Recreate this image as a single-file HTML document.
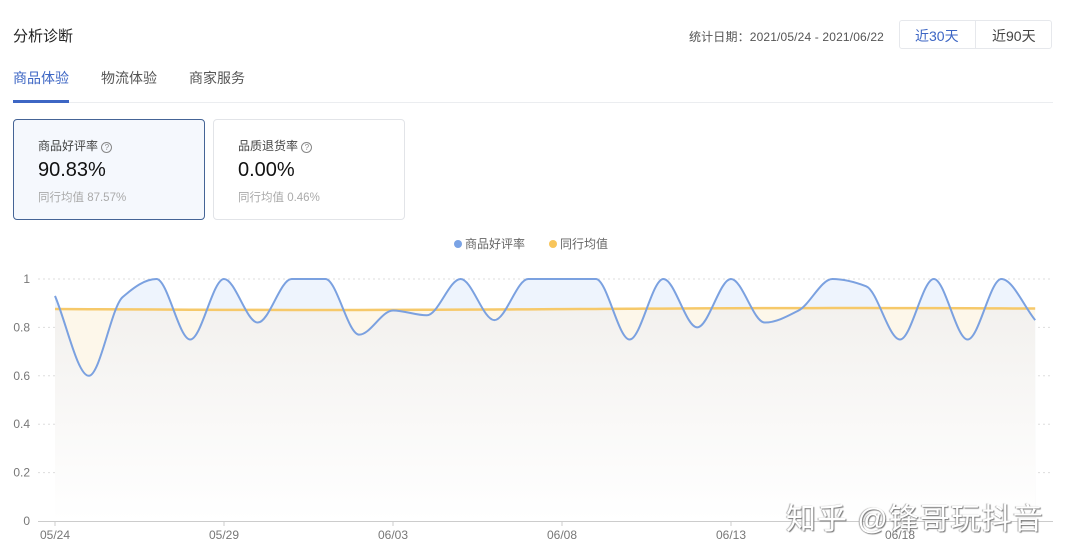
<!DOCTYPE html>
<html><head><meta charset="utf-8"><style>
body{margin:0;width:1074px;height:560px;overflow:hidden;background:#fff;font-family:"Liberation Sans","Noto Sans CJK SC",sans-serif;position:relative}
.a{position:absolute;white-space:nowrap}
</style></head><body>
<div class="a" style="left:13px;top:25px;font-size:15px;color:#222">分析诊断</div>
<div class="a" style="left:689px;top:28px;font-size:12px;color:#555;letter-spacing:0.15px">统计日期：2021/05/24 - 2021/06/22</div>
<div class="a" style="left:899px;top:20px;width:153px;height:29px;border:1px solid #e6e8ec;border-radius:3px;box-sizing:border-box"></div>
<div class="a" style="left:975px;top:20px;width:1px;height:29px;background:#e6e8ec"></div>
<div class="a" style="left:915px;top:26px;font-size:14px;color:#3d66c4">近30天</div>
<div class="a" style="left:992px;top:26px;font-size:14px;color:#444">近90天</div>
<div class="a" style="left:13px;top:68px;font-size:14px;color:#3d66c4">商品体验</div>
<div class="a" style="left:101px;top:68px;font-size:14px;color:#555">物流体验</div>
<div class="a" style="left:189px;top:68px;font-size:14px;color:#555">商家服务</div>
<div class="a" style="left:13px;top:102px;width:1040px;height:1px;background:#ebedf0"></div>
<div class="a" style="left:13px;top:100px;width:56px;height:3px;background:#3d66c4"></div>
<div class="a" style="left:13px;top:119px;width:192px;height:101px;border:1px solid #456496;border-radius:4px;background:#f5f8fd;box-sizing:border-box"></div>
<div class="a" style="left:213px;top:119px;width:192px;height:101px;border:1px solid #e2e4e8;border-radius:4px;box-sizing:border-box"></div>
<div class="a" style="left:38px;top:137px;font-size:12px;color:#444">商品好评率 <span style="display:inline-block;width:9px;height:9px;border:1px solid #888;border-radius:50%;font-size:8px;line-height:9px;text-align:center;color:#888">?</span></div>
<div class="a" style="left:238px;top:137px;font-size:12px;color:#444">品质退货率 <span style="display:inline-block;width:9px;height:9px;border:1px solid #888;border-radius:50%;font-size:8px;line-height:9px;text-align:center;color:#888">?</span></div>
<div class="a" style="left:38px;top:159px;font-size:20px;color:#111">90.83%</div>
<div class="a" style="left:238px;top:159px;font-size:20px;color:#111">0.00%</div>
<div class="a" style="left:38px;top:189px;font-size:11.5px;color:#aaa">同行均值 87.57%</div>
<div class="a" style="left:238px;top:189px;font-size:11.5px;color:#aaa">同行均值 0.46%</div>
<div class="a" style="left:454px;top:235px;font-size:12px;color:#666"><span style="display:inline-block;width:8px;height:8px;border-radius:50%;background:#7aa3e5;margin-right:3px"></span>商品好评率<span style="display:inline-block;width:8px;height:8px;border-radius:50%;background:#f8c55a;margin:0 3px 0 24px"></span>同行均值</div>
<svg class="a" style="left:0;top:0" width="1074" height="560" id="s">
<defs><linearGradient id="g" x1="0" y1="0" x2="0" y2="1"><stop offset="0" stop-color="#f1efec"/><stop offset="1" stop-color="#fff"/></linearGradient>
<clipPath id="ca"><path id="cap"/></clipPath></defs>
<g id="grid"></g>
<path id="fy" fill="#fdf7ea"/>
<path id="fb" fill="#eef4fd"/>
<path id="fg" fill="url(#g)" clip-path="url(#ca)"/>
<path id="ly" fill="none" stroke="#f6c96a" stroke-width="2.5"/>
<path id="lb" fill="none" stroke="#7ba1e0" stroke-width="2"/>
<g id="ax" font-size="12" fill="#777" font-family="Liberation Sans,sans-serif"></g>
</svg>
<div class="a" style="left:786px;top:494px;font-size:30px;color:#fff;text-shadow:1px 1px 1px #777,-1px 0 1px #aaa;letter-spacing:1px">知乎 @锋哥玩抖音</div>
<script>
var B=[0.93,0.6,0.925,1,0.75,1,0.82,1,1,0.77,0.87,0.85,1,0.83,1,1,1,0.75,1,0.8,1,0.82,0.87,1,0.97,0.75,1,0.75,1,0.83];
var Y=[];for(var i=0;i<30;i++)Y.push(0.876-0.004*Math.sin(i/5));
function X(i){return 55+i*33.8}function V(v){return 521-242*v}
function mono(vals){var n=vals.length,xs=[],ys=[],d=[],m=[];for(var i=0;i<n;i++){xs.push(X(i));ys.push(V(vals[i]));}
for(i=0;i<n-1;i++)d.push((ys[i+1]-ys[i])/(xs[i+1]-xs[i]));
m[0]=d[0];m[n-1]=d[n-2];for(i=1;i<n-1;i++){if(d[i-1]*d[i]<=0)m[i]=0;else m[i]=2/((1/d[i-1])+(1/d[i]));}
var s="M"+xs[0]+","+ys[0];for(i=0;i<n-1;i++){var h=(xs[i+1]-xs[i])/3;s+="C"+(xs[i]+h)+","+(ys[i]+m[i]*h)+" "+(xs[i+1]-h)+","+(ys[i+1]-m[i+1]*h)+" "+xs[i+1]+","+ys[i+1];}return s;}
var pb=mono(B),py=mono(Y),cl="L"+X(29)+",521L"+X(0)+",521Z";
function $(i){return document.getElementById(i)}
$("lb").setAttribute("d",pb);$("ly").setAttribute("d",py);
$("fb").setAttribute("d",pb+cl);$("fy").setAttribute("d",py+cl);$("fg").setAttribute("d",pb+cl);$("cap").setAttribute("d",py+cl);
var g="",a="";var lab=["0","0.2","0.4","0.6","0.8","1"];
for(i=0;i<6;i++){var y=V(i*0.2);if(i>0)g+='<line x1="38" x2="1053" y1="'+y+'" y2="'+y+'" stroke="#ddd" stroke-dasharray="2,3"/>';a+='<text x="30" y="'+(y+4)+'" text-anchor="end">'+lab[i]+'</text>';}
g+='<line x1="38" x2="1053" y1="521.5" y2="521.5" stroke="#ccc"/>';
var dl=["05/24","05/29","06/03","06/08","06/13","06/18"];
for(i=0;i<6;i++){var x=X(i*5);g+='<line x1="'+x+'" x2="'+x+'" y1="521" y2="526" stroke="#ccc"/>';a+='<text x="'+x+'" y="539" text-anchor="middle">'+dl[i]+'</text>';}
$("grid").innerHTML=g;$("ax").innerHTML=a;
</script>
</body></html>
